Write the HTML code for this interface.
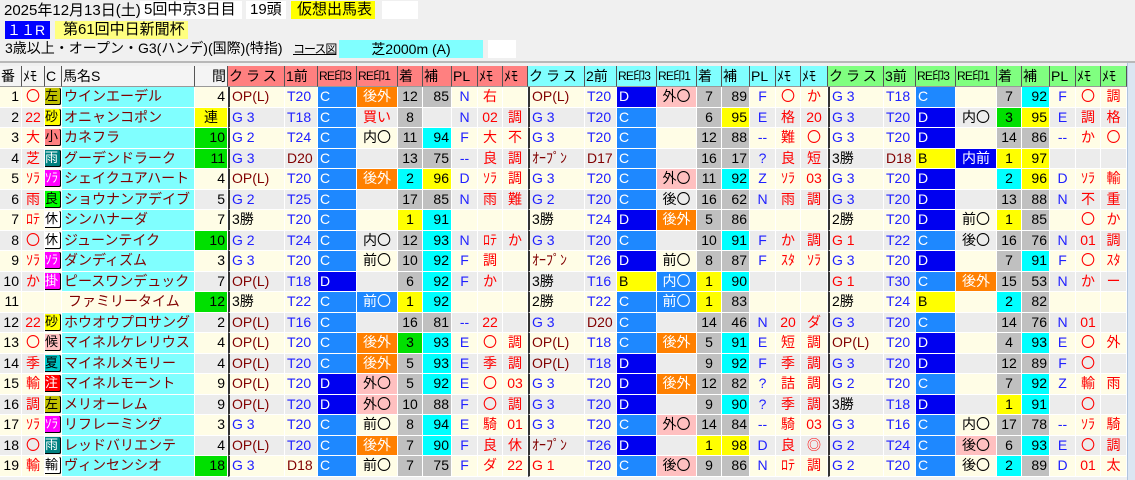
<!DOCTYPE html>
<html><head><meta charset="utf-8">
<style>
*{margin:0;padding:0;box-sizing:border-box}
body{width:1135px;height:480px;overflow:hidden;background:#f0f0f0;font-family:"Liberation Sans","Noto Sans CJK JP",sans-serif;font-size:14px;color:#000;position:relative}
.a{position:absolute;height:18px;line-height:18px;white-space:nowrap;font-size:15px}
.hr{position:absolute;left:0;top:61px;width:1135px;height:2px;background:#b8b8b8}
.sb{position:absolute;left:1127px;top:63px;width:8px;height:417px;background:#dbe6f2;border-left:1px solid #b0c4de}
table{position:absolute;left:0;top:66px;border-collapse:separate;border-spacing:0;table-layout:fixed;width:1127px}
td{height:20.5px;padding:0 2px;border-right:1px solid #fff;border-bottom:1px solid #fff;white-space:nowrap;overflow:hidden;line-height:19px;font-size:14px}
tr.h td{height:21px;border-right:1px solid #555;border-bottom:1px solid #999;font-size:14px;padding:0 1px}
tr.h td.s{font-size:12px;letter-spacing:-0.8px}
tr.h td.q{letter-spacing:3px}
tr.o{background:#fffde6}tr.g{background:#ececec}
.hp{background:#ff8080}.hc{background:#80ffff}.hg{background:#80ff80}.hw{background:#f4f4f4}
.n{background:#80ffff;color:#800000}
.r{text-align:right}.c{text-align:center}
.k{color:#f00;text-align:center}
.b{color:#2020ff}.dr{color:#800000}.rd{color:#f00}
.C{background:#1e88ff;color:#fff}.D{background:#0000f0;color:#fff}.B{background:#ffff00}
.ow{background:#ff8000;color:#fff;text-align:center}.pk{background:#ffc0c0;text-align:center}
.bl{background:#1e88ff;color:#fff;text-align:center}.db{background:#0000f0;color:#fff;text-align:center}
.gy{background:#c0c0c0}.cy{background:#00ffff}.ye{background:#ffff00}.gr{background:#00e000}
.L{border-left:2px solid #333}
.w{display:block;width:17px;height:17px;line-height:16px;font-size:13px;border-right:2px solid #000;border-bottom:1px solid #000;border-radius:0 3px 3px 0;text-align:left;overflow:hidden}
td.wc{padding:0}
</style></head><body>
<div class="a" style="left:4px;top:2px">2025年12月13日(土)</div>
<div class="a" style="left:140px;top:1px;width:102px;background:#fff;padding-left:4px">5回中京3日目</div>
<div class="a" style="left:246px;top:1px;width:40px;background:#fff;padding-left:4px">19頭</div>
<div class="a" style="left:291px;top:1px;width:84px;background:#ffff00;padding-left:6px">仮想出馬表</div>
<div class="a" style="left:382px;top:1px;width:36px;background:#fff"></div>
<div class="a" style="left:5px;top:21px;width:45px;background:#0000ff;color:#fff;padding-left:2px;font-size:14px">１１R</div>
<div class="a" style="left:55px;top:21px;width:133px;background:#ffff80;padding-left:8px">第61回中日新聞杯</div>
<div class="a" style="left:5px;top:39px;font-size:14px">3歳以上・オープン・G3(ハンデ)(国際)(特指)</div>
<div class="a" style="left:293px;top:40px;font-size:12px;letter-spacing:-1px;text-decoration:underline">コース図</div>
<div class="a" style="left:339px;top:40px;width:144px;background:#80ffff;text-align:center;font-size:14px">芝2000m (A)</div>
<div class="a" style="left:488px;top:40px;width:28px;background:#fff"></div>
<div class="hr"></div>
<div class="sb"></div>
<table>
<colgroup><col style="width:22px"><col style="width:23px"><col style="width:17px"><col style="width:133px"><col style="width:33px"><col style="width:57px"><col style="width:33px"><col style="width:39px"><col style="width:41px"><col style="width:25px"><col style="width:29px"><col style="width:26px"><col style="width:25px"><col style="width:25px"><col style="width:57px"><col style="width:32px"><col style="width:40px"><col style="width:40px"><col style="width:25px"><col style="width:28px"><col style="width:26px"><col style="width:25px"><col style="width:27px"><col style="width:56px"><col style="width:32px"><col style="width:40px"><col style="width:41px"><col style="width:25px"><col style="width:28px"><col style="width:26px"><col style="width:25px"><col style="width:26px"></colgroup>
<tr class="h"><td class="hw">番</td><td class="hw">ﾒﾓ</td><td class="hw">C</td><td class="hw">馬名S</td><td class="hw r">間</td>
<td class="hp q">クラス</td><td class="hp">1前</td><td class="hp s">RE印3</td><td class="hp s">RE印1</td><td class="hp">着</td><td class="hp">補</td><td class="hp">PL</td><td class="hp">ﾒﾓ</td><td class="hp">ﾒﾓ</td>
<td class="hc q">クラス</td><td class="hc">2前</td><td class="hc s">RE印3</td><td class="hc s">RE印1</td><td class="hc">着</td><td class="hc">補</td><td class="hc">PL</td><td class="hc">ﾒﾓ</td><td class="hc">ﾒﾓ</td>
<td class="hg q">クラス</td><td class="hg">3前</td><td class="hg s">RE印3</td><td class="hg s">RE印1</td><td class="hg">着</td><td class="hg">補</td><td class="hg">PL</td><td class="hg">ﾒﾓ</td><td class="hg">ﾒﾓ</td></tr>

<tr class="o"><td class="r">1</td><td class="k">〇</td><td class="wc"><span class="w" style="background:#c0c000">左</span></td><td class="n">ウインエーデル</td><td class="r">4</td>
<td class="L dr">OP(L)</td><td class="b">T20</td><td class="C">C</td><td class="ow">後外</td><td class="gy c">12</td><td class="gy r">85</td><td class="b c">N</td><td class="rd c">右</td><td></td>
<td class="L dr">OP(L)</td><td class="b">T20</td><td class="D">D</td><td class="pk">外〇</td><td class="gy c">7</td><td class="gy r">89</td><td class="b c">F</td><td class="rd c">〇</td><td class="rd c">か</td>
<td class="L b">G 3</td><td class="b">T18</td><td class="C">C</td><td></td><td class="gy c">7</td><td class="cy r">92</td><td class="b c">F</td><td class="rd c">〇</td><td class="rd c">調</td></tr>

<tr class="g"><td class="r">2</td><td class="k">22</td><td class="wc"><span class="w" style="background:#ffff00">砂</span></td><td class="n">オニャンコポン</td><td class="ye c">連</td>
<td class="L b">G 3</td><td class="b">T18</td><td class="C">C</td><td class="rd c">買い</td><td class="gy c">8</td><td></td><td class="b c">N</td><td class="rd c">02</td><td class="rd c">調</td>
<td class="L b">G 3</td><td class="b">T20</td><td class="C">C</td><td></td><td class="gy c">6</td><td class="ye r">95</td><td class="b c">E</td><td class="rd c">格</td><td class="rd c">20</td>
<td class="L b">G 3</td><td class="b">T20</td><td class="D">D</td><td class="c">内〇</td><td class="gr c">3</td><td class="ye r">95</td><td class="b c">E</td><td class="rd c">調</td><td class="rd c">格</td></tr>

<tr class="o"><td class="r">3</td><td class="k">大</td><td class="wc"><span class="w" style="background:#ff8080">小</span></td><td class="n">カネフラ</td><td class="gr r">10</td>
<td class="L b">G 2</td><td class="b">T24</td><td class="C">C</td><td class="c">内〇</td><td class="gy c">11</td><td class="cy r">94</td><td class="b c">F</td><td class="rd c">大</td><td class="rd c">不</td>
<td class="L b">G 3</td><td class="b">T20</td><td class="C">C</td><td></td><td class="gy c">12</td><td class="gy r">88</td><td class="b c">--</td><td class="rd c">難</td><td class="rd c">〇</td>
<td class="L b">G 3</td><td class="b">T20</td><td class="D">D</td><td></td><td class="gy c">14</td><td class="gy r">86</td><td class="b c">--</td><td class="rd c">か</td><td class="rd c">〇</td></tr>

<tr class="g"><td class="r">4</td><td class="k">芝</td><td class="wc"><span class="w" style="background:#008080;color:#fff">雨</span></td><td class="n">グーデンドラーク</td><td class="gr r">11</td>
<td class="L b">G 3</td><td class="dr">D20</td><td class="C">C</td><td></td><td class="gy c">13</td><td class="gy r">75</td><td class="b c">--</td><td class="rd c">良</td><td class="rd c">調</td>
<td class="L dr">ｵｰﾌﾟﾝ</td><td class="dr">D17</td><td class="C">C</td><td></td><td class="gy c">16</td><td class="gy r">17</td><td class="b c">?</td><td class="rd c">良</td><td class="rd c">短</td>
<td class="L">3勝</td><td class="dr">D18</td><td class="B">B</td><td class="db">内前</td><td class="ye c">1</td><td class="ye r">97</td><td></td><td></td><td></td></tr>

<tr class="o"><td class="r">5</td><td class="k">ｿﾗ</td><td class="wc"><span class="w" style="background:#ff00ff;color:#fff">ｿﾗ</span></td><td class="n">シェイクユアハート</td><td class="r">4</td>
<td class="L dr">OP(L)</td><td class="b">T20</td><td class="C">C</td><td class="ow">後外</td><td class="cy c">2</td><td class="ye r">96</td><td class="b c">D</td><td class="rd c">ｿﾗ</td><td class="rd c">調</td>
<td class="L b">G 3</td><td class="b">T20</td><td class="C">C</td><td class="pk">外〇</td><td class="gy c">11</td><td class="cy r">92</td><td class="b c">Z</td><td class="rd c">ｿﾗ</td><td class="rd c">03</td>
<td class="L b">G 3</td><td class="b">T20</td><td class="D">D</td><td></td><td class="cy c">2</td><td class="ye r">96</td><td class="b c">D</td><td class="rd c">ｿﾗ</td><td class="rd c">輸</td></tr>

<tr class="g"><td class="r">6</td><td class="k">雨</td><td class="wc"><span class="w" style="background:#00ff00">良</span></td><td class="n">ショウナンアデイブ</td><td class="r">5</td>
<td class="L b">G 2</td><td class="b">T25</td><td class="C">C</td><td></td><td class="gy c">17</td><td class="gy r">85</td><td class="b c">N</td><td class="rd c">雨</td><td class="rd c">難</td>
<td class="L b">G 2</td><td class="b">T20</td><td class="C">C</td><td class="c">後〇</td><td class="gy c">16</td><td class="gy r">62</td><td class="b c">N</td><td class="rd c">雨</td><td class="rd c">調</td>
<td class="L b">G 3</td><td class="b">T20</td><td class="D">D</td><td></td><td class="gy c">13</td><td class="gy r">88</td><td class="b c">N</td><td class="rd c">不</td><td class="rd c">重</td></tr>

<tr class="o"><td class="r">7</td><td class="k">ﾛﾃ</td><td class="wc"><span class="w" style="background:#fff">休</span></td><td class="n">シンハナーダ</td><td class="r">7</td>
<td class="L">3勝</td><td class="b">T20</td><td class="C">C</td><td></td><td class="ye c">1</td><td class="cy r">91</td><td></td><td></td><td></td>
<td class="L">3勝</td><td class="b">T24</td><td class="D">D</td><td class="ow">後外</td><td class="gy c">5</td><td class="gy r">86</td><td></td><td></td><td></td>
<td class="L">2勝</td><td class="b">T20</td><td class="D">D</td><td class="c">前〇</td><td class="ye c">1</td><td class="gy r">85</td><td></td><td class="rd c">〇</td><td class="rd c">か</td></tr>

<tr class="g"><td class="r">8</td><td class="k">〇</td><td class="wc"><span class="w" style="background:#fff">休</span></td><td class="n">ジューンテイク</td><td class="gr r">10</td>
<td class="L b">G 2</td><td class="b">T24</td><td class="C">C</td><td class="c">内〇</td><td class="gy c">12</td><td class="cy r">93</td><td class="b c">N</td><td class="rd c">ﾛﾃ</td><td class="rd c">か</td>
<td class="L b">G 3</td><td class="b">T20</td><td class="C">C</td><td></td><td class="gy c">10</td><td class="cy r">91</td><td class="b c">F</td><td class="rd c">か</td><td class="rd c">調</td>
<td class="L rd">G 1</td><td class="b">T22</td><td class="C">C</td><td class="c">後〇</td><td class="gy c">16</td><td class="gy r">76</td><td class="b c">N</td><td class="rd c">01</td><td class="rd c">調</td></tr>

<tr class="o"><td class="r">9</td><td class="k">ｿﾗ</td><td class="wc"><span class="w" style="background:#ff00ff;color:#fff">ｿﾗ</span></td><td class="n">ダンディズム</td><td class="r">3</td>
<td class="L b">G 3</td><td class="b">T20</td><td class="C">C</td><td class="c">前〇</td><td class="gy c">10</td><td class="cy r">92</td><td class="b c">F</td><td class="rd c">調</td><td></td>
<td class="L dr">ｵｰﾌﾟﾝ</td><td class="b">T26</td><td class="D">D</td><td class="c">前〇</td><td class="gy c">8</td><td class="gy r">87</td><td class="b c">F</td><td class="rd c">ｽﾀ</td><td class="rd c">ｿﾗ</td>
<td class="L b">G 3</td><td class="b">T20</td><td class="D">D</td><td></td><td class="gy c">7</td><td class="cy r">91</td><td class="b c">F</td><td class="rd c">〇</td><td class="rd c">ｽﾀ</td></tr>

<tr class="g"><td class="r">10</td><td class="k">か</td><td class="wc"><span class="w" style="background:#ff00ff;color:#fff">掛</span></td><td class="n">ピースワンデュック</td><td class="r">7</td>
<td class="L dr">OP(L)</td><td class="b">T18</td><td class="D">D</td><td></td><td class="gy c">6</td><td class="cy r">92</td><td class="b c">F</td><td class="rd c">か</td><td></td>
<td class="L">3勝</td><td class="b">T16</td><td class="B">B</td><td class="bl">内〇</td><td class="ye c">1</td><td class="cy r">90</td><td></td><td></td><td></td>
<td class="L rd">G 1</td><td class="b">T30</td><td class="C">C</td><td class="ow">後外</td><td class="gy c">15</td><td class="gy r">53</td><td class="b c">N</td><td class="rd c">か</td><td class="rd c">ー</td></tr>

<tr class="o"><td class="r">11</td><td></td><td></td><td class="dr" style="padding-left:6px">ファミリータイム</td><td class="gr r">12</td>
<td class="L">3勝</td><td class="b">T22</td><td class="C">C</td><td class="bl">前〇</td><td class="ye c">1</td><td class="cy r">92</td><td></td><td></td><td></td>
<td class="L">2勝</td><td class="b">T22</td><td class="C">C</td><td class="bl">前〇</td><td class="ye c">1</td><td class="gy r">83</td><td></td><td></td><td></td>
<td class="L">2勝</td><td class="b">T24</td><td class="B">B</td><td></td><td class="cy c">2</td><td class="gy r">82</td><td></td><td></td><td></td></tr>

<tr class="g"><td class="r">12</td><td class="k">22</td><td class="wc"><span class="w" style="background:#ffff00">砂</span></td><td class="n">ホウオウプロサング</td><td class="r">2</td>
<td class="L dr">OP(L)</td><td class="b">T16</td><td class="C">C</td><td></td><td class="gy c">16</td><td class="gy r">81</td><td class="b c">--</td><td class="rd c">22</td><td></td>
<td class="L b">G 3</td><td class="dr">D20</td><td class="C">C</td><td></td><td class="gy c">14</td><td class="gy r">46</td><td class="b c">N</td><td class="rd c">20</td><td class="rd c">ダ</td>
<td class="L b">G 3</td><td class="b">T20</td><td class="C">C</td><td></td><td class="gy c">14</td><td class="gy r">76</td><td class="b c">N</td><td class="rd c">01</td><td></td></tr>

<tr class="o"><td class="r">13</td><td class="k">〇</td><td class="wc"><span class="w" style="background:#ffc0c0">候</span></td><td class="n">マイネルケレリウス</td><td class="r">4</td>
<td class="L dr">OP(L)</td><td class="b">T20</td><td class="C">C</td><td class="ow">後外</td><td class="gr c">3</td><td class="cy r">93</td><td class="b c">E</td><td class="rd c">〇</td><td class="rd c">調</td>
<td class="L dr">OP(L)</td><td class="b">T18</td><td class="C">C</td><td class="ow">後外</td><td class="gy c">5</td><td class="cy r">91</td><td class="b c">E</td><td class="rd c">短</td><td class="rd c">調</td>
<td class="L dr">OP(L)</td><td class="b">T20</td><td class="D">D</td><td></td><td class="gy c">4</td><td class="cy r">93</td><td class="b c">E</td><td class="rd c">〇</td><td class="rd c">外</td></tr>

<tr class="g"><td class="r">14</td><td class="k">季</td><td class="wc"><span class="w" style="background:#00c8c8">夏</span></td><td class="n">マイネルメモリー</td><td class="r">4</td>
<td class="L dr">OP(L)</td><td class="b">T20</td><td class="C">C</td><td class="ow">後外</td><td class="gy c">5</td><td class="cy r">93</td><td class="b c">E</td><td class="rd c">季</td><td class="rd c">調</td>
<td class="L dr">OP(L)</td><td class="b">T18</td><td class="D">D</td><td></td><td class="gy c">9</td><td class="cy r">92</td><td class="b c">F</td><td class="rd c">季</td><td class="rd c">調</td>
<td class="L b">G 3</td><td class="b">T20</td><td class="D">D</td><td></td><td class="gy c">12</td><td class="gy r">89</td><td class="b c">F</td><td class="rd c">〇</td><td></td></tr>

<tr class="o"><td class="r">15</td><td class="k">輸</td><td class="wc"><span class="w" style="background:#ff0000;color:#fff">注</span></td><td class="n">マイネルモーント</td><td class="r">9</td>
<td class="L dr">OP(L)</td><td class="b">T20</td><td class="D">D</td><td class="pk">外〇</td><td class="gy c">5</td><td class="cy r">92</td><td class="b c">E</td><td class="rd c">〇</td><td class="rd c">03</td>
<td class="L b">G 3</td><td class="b">T20</td><td class="D">D</td><td class="ow">後外</td><td class="gy c">12</td><td class="gy r">82</td><td class="b c">?</td><td class="rd c">詰</td><td class="rd c">調</td>
<td class="L b">G 2</td><td class="b">T20</td><td class="C">C</td><td></td><td class="gy c">7</td><td class="cy r">92</td><td class="b c">Z</td><td class="rd c">輸</td><td class="rd c">雨</td></tr>

<tr class="g"><td class="r">16</td><td class="k">調</td><td class="wc"><span class="w" style="background:#c0c000">左</span></td><td class="n">メリオーレム</td><td class="r">9</td>
<td class="L dr">OP(L)</td><td class="b">T20</td><td class="D">D</td><td class="pk">外〇</td><td class="gy c">10</td><td class="gy r">88</td><td class="b c">F</td><td class="rd c">〇</td><td class="rd c">調</td>
<td class="L b">G 3</td><td class="b">T20</td><td class="D">D</td><td></td><td class="gy c">9</td><td class="cy r">90</td><td class="b c">?</td><td class="rd c">季</td><td class="rd c">調</td>
<td class="L">3勝</td><td class="b">T18</td><td class="D">D</td><td></td><td class="ye c">1</td><td class="cy r">91</td><td></td><td class="rd c">〇</td><td></td></tr>

<tr class="o"><td class="r">17</td><td class="k">ｿﾗ</td><td class="wc"><span class="w" style="background:#ff00ff;color:#fff">ｿﾗ</span></td><td class="n">リフレーミング</td><td class="r">3</td>
<td class="L b">G 3</td><td class="b">T20</td><td class="C">C</td><td class="c">前〇</td><td class="gy c">8</td><td class="cy r">94</td><td class="b c">E</td><td class="rd c">騎</td><td class="rd c">01</td>
<td class="L b">G 3</td><td class="b">T20</td><td class="C">C</td><td class="pk">外〇</td><td class="gy c">14</td><td class="gy r">84</td><td class="b c">--</td><td class="rd c">騎</td><td class="rd c">03</td>
<td class="L b">G 3</td><td class="b">T16</td><td class="C">C</td><td class="c">内〇</td><td class="gy c">17</td><td class="gy r">78</td><td class="b c">--</td><td class="rd c">ｿﾗ</td><td class="rd c">騎</td></tr>

<tr class="g"><td class="r">18</td><td class="k">〇</td><td class="wc"><span class="w" style="background:#008080;color:#fff">雨</span></td><td class="n">レッドバリエンテ</td><td class="r">4</td>
<td class="L dr">OP(L)</td><td class="b">T20</td><td class="C">C</td><td class="ow">後外</td><td class="gy c">7</td><td class="cy r">90</td><td class="b c">F</td><td class="rd c">良</td><td class="rd c">休</td>
<td class="L dr">ｵｰﾌﾟﾝ</td><td class="b">T26</td><td class="D">D</td><td></td><td class="ye c">1</td><td class="ye r">98</td><td class="b c">D</td><td class="rd c">良</td><td class="rd c">◎</td>
<td class="L b">G 2</td><td class="b">T24</td><td class="C">C</td><td class="pk">後〇</td><td class="gy c">6</td><td class="cy r">93</td><td class="b c">E</td><td class="rd c">〇</td><td class="rd c">調</td></tr>

<tr class="o"><td class="r">19</td><td class="k">輸</td><td class="wc"><span class="w" style="background:#fff">輸</span></td><td class="n">ヴィンセンシオ</td><td class="gr r">18</td>
<td class="L b">G 3</td><td class="dr">D18</td><td class="C">C</td><td class="c">前〇</td><td class="gy c">7</td><td class="gy r">75</td><td class="b c">F</td><td class="rd c">ダ</td><td class="rd c">22</td>
<td class="L rd">G 1</td><td class="b">T20</td><td class="C">C</td><td class="pk">後〇</td><td class="gy c">9</td><td class="gy r">86</td><td class="b c">N</td><td class="rd c">ﾛﾃ</td><td class="rd c">調</td>
<td class="L b">G 2</td><td class="b">T20</td><td class="C">C</td><td class="c">後〇</td><td class="cy c">2</td><td class="gy r">89</td><td class="b c">D</td><td class="rd c">01</td><td class="rd c">太</td></tr>
</table>
</body></html>
